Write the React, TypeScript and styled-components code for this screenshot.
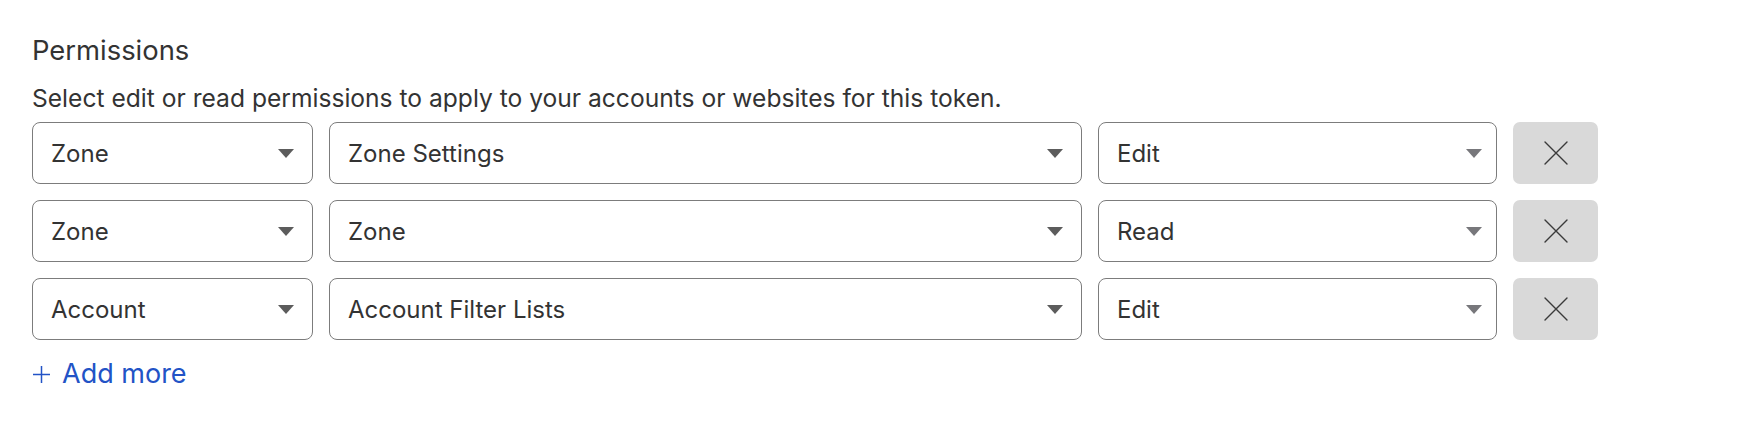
import styled, { createGlobalStyle } from 'styled-components';

const GlobalStyle = createGlobalStyle`
  body {
    margin: 0;
    background: #ffffff;
    font-family: Inter, "Noto Sans", "Liberation Sans", sans-serif;
    color: #333333;
  }
`;

const Wrapper = styled.section`
  padding: 34px 32px 0;
  width: 1738px;
  height: 444px;
  box-sizing: border-box;
`;

const Title = styled.h3`
  margin: 0;
  font-size: 27.4px;
  font-weight: 400;
  line-height: 32px;
  color: #333333;
`;

const Description = styled.p`
  margin: 16px 0 0;
  font-size: 24.6px;
  line-height: 32px;
  color: #333333;
`;

const Rows = styled.div`
  margin-top: 8px;
  display: flex;
  flex-direction: column;
  gap: 16px;
`;

const Row = styled.div`
  display: grid;
  grid-template-columns: 281px 753px 399px 85px;
  gap: 16px;
  height: 62px;
`;

const Select = styled.div`
  display: flex;
  align-items: center;
  justify-content: space-between;
  box-sizing: border-box;
  height: 100%;
  padding: 0 18px 0 18px;
  border: 1px solid #7c7c7c;
  border-radius: 8px;
  font-size: 24px;
  color: #333333;
  background: #ffffff;
`;

const Caret = styled.span<{ $light?: boolean }>`
  width: 0;
  height: 0;
  border-left: 8.5px solid transparent;
  border-right: 8.5px solid transparent;
  border-top: 9px solid ${(p) => (p.$light ? '#77777b' : '#5c5c5c')};
  margin-right: ${(p) => (p.$light ? '-4px' : '0')};
`;

const RemoveBtn = styled.button`
  display: flex;
  align-items: center;
  justify-content: center;
  height: 100%;
  border: none;
  border-radius: 7px;
  background: #d9d9d9;
  padding: 0;
  cursor: pointer;
`;

const AddMore = styled.a`
  display: inline-flex;
  align-items: center;
  gap: 12px;
  margin-top: 17px;
  padding-left: 1px;
  font-size: 27px;
  line-height: 34px;
  color: #2253c6;
  cursor: pointer;
`;

const rows = [
  { scope: 'Zone', item: 'Zone Settings', level: 'Edit' },
  { scope: 'Zone', item: 'Zone', level: 'Read' },
  { scope: 'Account', item: 'Account Filter Lists', level: 'Edit' },
];

function CloseIcon() {
  return (
    <svg width="24" height="24" viewBox="0 0 24 24" fill="none">
      <path
        d="M1 1L23 23M23 1L1 23"
        stroke="#3a3a3a"
        strokeWidth="1.4"
        strokeLinecap="round"
      />
    </svg>
  );
}

function PlusIcon() {
  return (
    <svg width="17" height="17" viewBox="0 0 17 17" fill="none">
      <path d="M8.5 0V17M0 8.5H17" stroke="#2253c6" strokeWidth="1.5" />
    </svg>
  );
}

function App() {
  return (
    <>
      <GlobalStyle />
      <Wrapper>
        <Title>Permissions</Title>
        <Description>
          Select edit or read permissions to apply to your accounts or websites
          for this token.
        </Description>
        <Rows>
          {rows.map((r, i) => (
            <Row key={i}>
              <Select>
                {r.scope}
                <Caret />
              </Select>
              <Select>
                {r.item}
                <Caret />
              </Select>
              <Select>
                {r.level}
                <Caret $light />
              </Select>
              <RemoveBtn aria-label="Remove">
                <CloseIcon />
              </RemoveBtn>
            </Row>
          ))}
        </Rows>
        <AddMore>
          <PlusIcon />
          Add more
        </AddMore>
      </Wrapper>
    </>
  );
}

export default App;
